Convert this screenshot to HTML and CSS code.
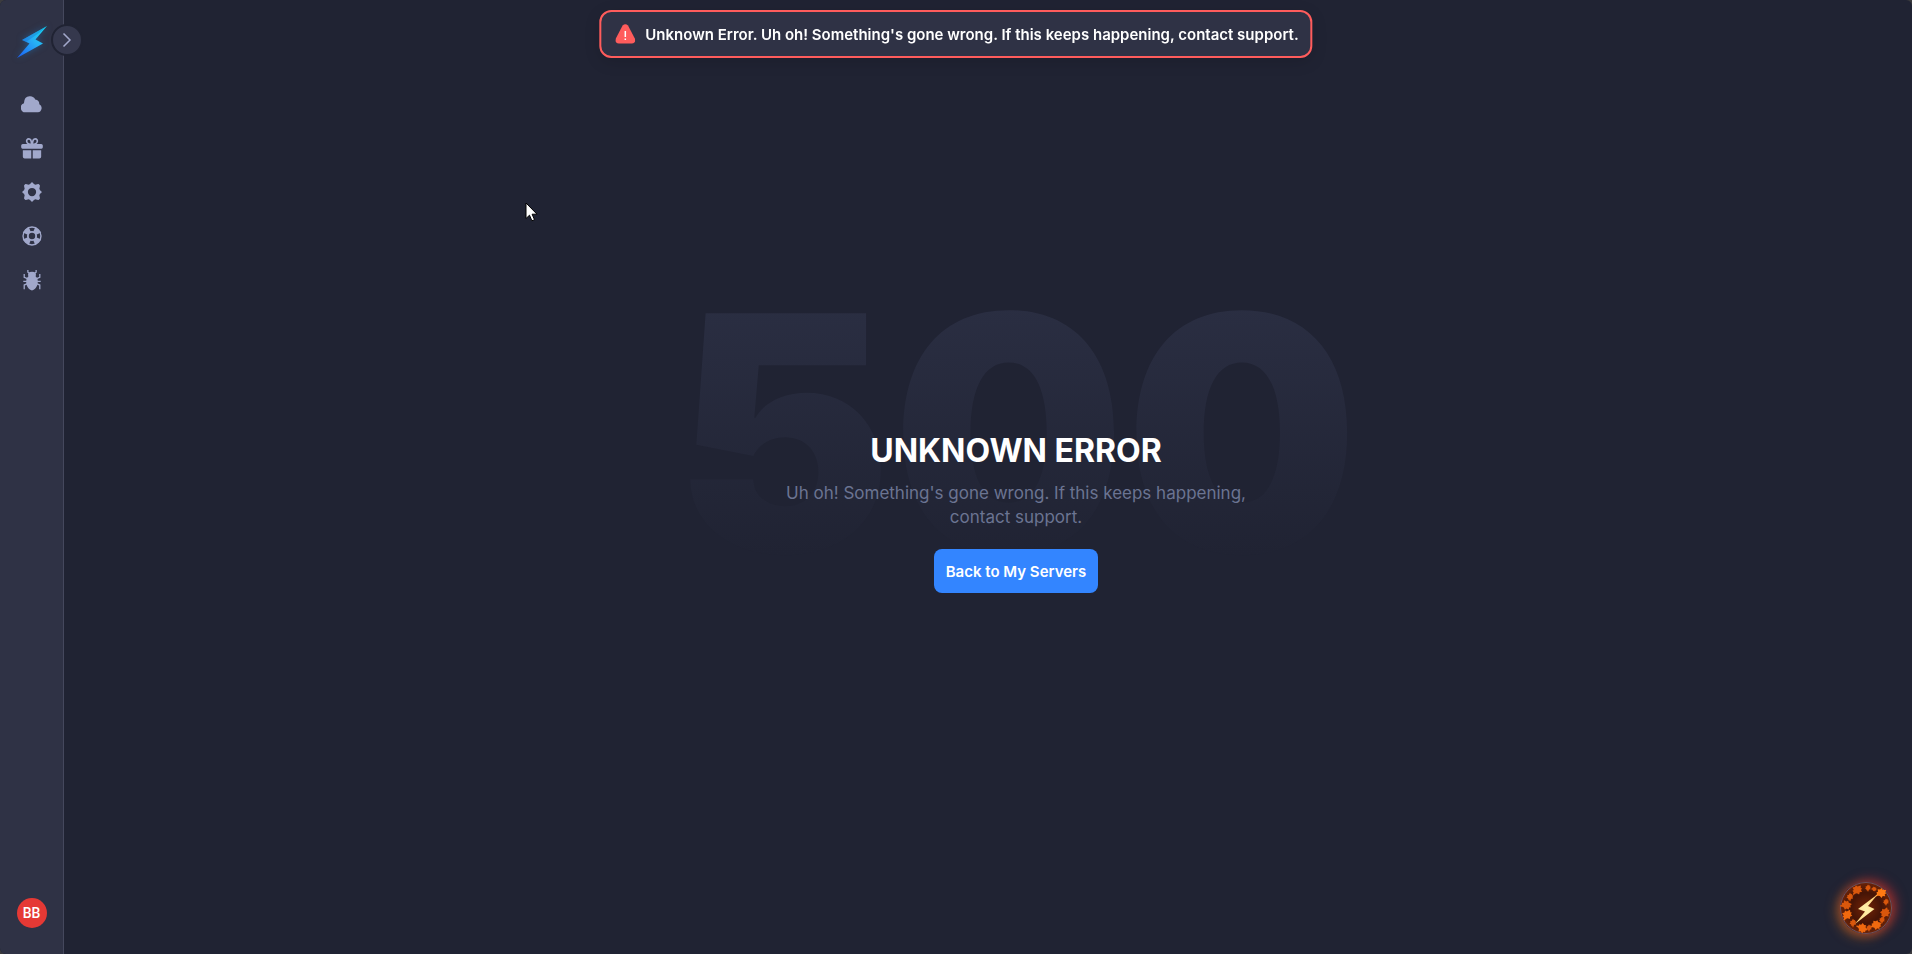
FILE: index.html
```
<!DOCTYPE html>
<html lang="en">
<head>
<meta charset="utf-8">
<title>Unknown Error</title>
<link rel="stylesheet" href="styles.css">
</head>
<body>
<div class="app">
  <aside class="sidebar">
    <a class="logo" href="#" aria-label="Home">
      <svg width="36" height="36" viewBox="0 0 36 36"><defs><linearGradient id="bolt" x1="1" y1="0" x2="0" y2="1"><stop offset="0" stop-color="#12e0f2"/><stop offset=".45" stop-color="#27b1f5"/><stop offset="1" stop-color="#1a5df5"/></linearGradient></defs><path d="M33 2 8 16 15.500 19.500 3 34 29 19.500 21.500 15.500Z" fill="url(#bolt)"/><path d="M33 2 8 16 12 18 25 9Z" fill="#155cc4" opacity=".3"/></svg>
    </a>
    <button class="toggle" type="button" aria-label="Expand menu">
      <svg width="10" height="16" viewBox="0 0 10 16"><path d="M1.500 1.500 8 8l-6.500 6.500" fill="none" stroke="currentColor" stroke-width="1.500"/></svg>
    </button>
    <nav class="nav">
      <a href="#" aria-label="Servers"><svg viewBox="0 0 24 24"><path d="M5.500 21a5 5 0 0 1-2.300-9.700Q3.500 3 10 3.500 14 3.700 15.500 7 20 7.500 20 12.200A4.700 4.700 0 0 1 18.500 21Z"/></svg></a>
      <a href="#" aria-label="Rewards"><svg viewBox="0 0 24 24"><path d="M2 14.500h9.200V23.500H4a2 2 0 0 1-2-2ZM12.800 14.500H22v7a2 2 0 0 1-2 2h-7.200ZM2 7.500h20a1.800 1.800 0 0 1 1.800 1.800v1.900q0 1.500-1.500 1.500H1.700Q.2 12.700.2 11.200V9.300A1.800 1.800 0 0 1 2 7.500Z"/><path d="M11.500 8C5 8 5 2 8.500 2c2.500 0 3 3 3 6ZM12.500 8c6.500 0 6.500-6 3-6-2.500 0-3 3-3 6Z" fill="none" stroke="currentColor" stroke-width="1.800"/></svg></a>
      <a href="#" aria-label="Settings"><svg viewBox="0 0 24 24"><path fill-rule="evenodd" d="M10 3.300Q12-.5 14 3.300L15.800 4Q19.900 2.700 19.900 4.100 21.300 4.100 20 8.200L20.700 10Q24.500 12 20.700 14L20 15.800Q21.300 19.900 19.900 19.900 19.900 21.300 15.800 20L14 20.700Q12 24.500 10 20.700L8.200 20Q4.100 21.300 4.100 19.900 2.700 19.900 4 15.800L3.300 14Q-.5 12 3.300 10L4 8.200Q2.700 4.100 4.100 4.100 4.100 2.700 8.200 4ZM12 7.500a4.500 4.500 0 1 0 0 9 4.500 4.500 0 1 0 0-9Z"/></svg></a>
      <a href="#" aria-label="Support"><svg viewBox="0 0 24 24"><circle cx="12" cy="12" r="9.800" fill="none" stroke="currentColor" stroke-width="1.500"/><circle cx="12" cy="12" r="4.500" fill="none" stroke="currentColor" stroke-width="2"/><path d="M7.500 2.200h9L14.300 7.800h-4.600ZM7.500 21.800h9L14.300 16.200h-4.600ZM2.200 7.500v9L7.800 14.300v-4.600ZM21.800 7.500v9L16.200 14.300v-4.600Z" transform="rotate(45 12 12)"/></svg></a>
      <a href="#" aria-label="Report a bug"><svg viewBox="0 0 24 24"><path d="M8 8.200Q6.500 3 12 3t4 5.200l1.800 1.800c1.600 5.500-.5 11.500-5.800 13.500-5.300-2-7.400-8-5.800-13.500Z"/><path d="M9 4.500 7.500 3.500V1M15 4.500l1.500-1V1M7 10.500 3.500 9V5.500M17 10.500 20.500 9V5.500M6.500 13.500h-4M17.500 13.500h4M7 16l-3.500 1.500V22M17 16l3.500 1.500V22" fill="none" stroke="currentColor" stroke-width="1.400"/></svg></a>
    </nav>
    <button class="avatar" type="button">BB</button>
  </aside>
  <main class="main">
    <div class="error">
      <div class="code">500</div>
      <div class="message">
        <h1>UNKNOWN ERROR</h1>
        <p>Uh oh! Something's gone wrong. If this keeps happening, contact support.</p>
        <button class="back" type="button">Back to My Servers</button>
      </div>
    </div>
  </main>
</div>
<div class="toast" role="alert">
  <svg width="20" height="20" viewBox="0 0 20 20"><path d="M7.300 1.500Q10-1.200 12.700 1.500L19.500 14.500Q21 19.300 16.500 19.500H3.500Q-1 19.300.5 14.500Z" fill="#ff5c5c"/><path d="M10 7v6M10 14.500V16" stroke="#fff" stroke-width="1.500"/></svg>
  <span>Unknown Error. Uh oh! Something's gone wrong. If this keeps happening, contact support.</span>
</div>
<button class="chat" type="button" aria-label="Open chat">
  <svg width="52" height="52" viewBox="0 0 52 52">
    <defs>
      <radialGradient id="disc"><stop offset="0" stop-color="#742407"/><stop offset=".6" stop-color="#451406"/><stop offset="1" stop-color="#6a2308"/></radialGradient>
      <linearGradient id="spark" x1="1" y1="0" x2="0" y2="1"><stop offset="0" stop-color="#ffc465"/><stop offset=".5" stop-color="#fff0a8"/><stop offset="1" stop-color="#ffcf78"/></linearGradient>
      <path id="leaf" d="M0-6 1.500-4 3-4.500 3-2.500 5-2 3.500 0 4.500 2 2 2.500 1 4 .5 6H-.5L-1 4-3 3.500-2.500 2-5 1-3.500-1-4-3-2-3Z"/>
    </defs>
    <circle cx="26" cy="26" r="25.500" fill="url(#disc)" stroke="#73525c"/>
    <g fill="#d9570c">
      <use href="#leaf" transform="translate(17 8) rotate(40)"/><use href="#leaf" transform="translate(28 6) scale(.6)"/><use href="#leaf" transform="translate(34 7) scale(.5) rotate(90)"/><use href="#leaf" transform="translate(41 11) rotate(60)" fill="#ff7a12"/><use href="#leaf" transform="translate(46 20) scale(.6)"/><use href="#leaf" transform="translate(45 31) rotate(20)"/><use href="#leaf" transform="translate(42 38) scale(.6)"/><use href="#leaf" transform="translate(36 43) rotate(70)" fill="#f0690f"/><use href="#leaf" transform="translate(29 46) scale(.6)"/><use href="#leaf" transform="translate(22 46) rotate(110)" fill="#f0690f"/><use href="#leaf" transform="translate(13 41) scale(.7)"/><use href="#leaf" transform="translate(7 33) rotate(30)" fill="#f0690f"/><use href="#leaf" transform="translate(6 23) rotate(80)"/><use href="#leaf" transform="translate(10 15) scale(.7)"/>
    </g>
    <path d="M38 12 18 27 25 29.500 15 42 34.500 27 28 24Z" fill="url(#spark)"/>
  </svg>
</button>
<svg class="cursor" width="14" height="21" viewBox="0 0 14 21"><path d="M1 1v15.500l3.500-3.300 2.400 5.600 2.600-1.100-2.400-5.500H12Z" fill="#fff" stroke="#000"/></svg>
</body>
</html>
```
FILE: styles.css
```
* { box-sizing: border-box; }
body {
  margin: 0;
  background: #3b3b3e;
  color: #fff;
  font-family: Inter, "Open Sans", sans-serif;
}
button { border: 0; padding: 0; font: inherit; color: inherit; }
.app {
  display: flex;
  min-height: 100vh;
  border-radius: 6px;
  background: #202333;
}
.sidebar {
  position: relative;
  display: flex;
  flex-direction: column;
  align-items: center;
  width: 64px;
  padding: 24px 0 26px;
  border-radius: 6px 0 0 6px;
  background: #2f3245;
  border-right: 1px solid #45485d;
}
.logo { height: 36px; filter: drop-shadow(0 0 3px #1d79c480); }
.logo svg { display: block; }
.toggle {
  position: absolute;
  top: 24px;
  right: -20px;
  display: grid;
  place-items: center;
  width: 32px;
  height: 32px;
  border: 2px solid #202333;
  border-radius: 50%;
  background: #35384d;
  color: #a3a9cc;
}
.nav { display: flex; flex-direction: column; margin-top: 22px; color: #a1a8cb; }
.nav a { display: grid; place-items: center; width: 44px; height: 44px; color: inherit; }
.nav svg { width: 22px; height: 22px; fill: currentColor; }
.avatar {
  width: 30px;
  height: 30px;
  margin-top: auto;
  border-radius: 50%;
  background: #e53935;
  font: 500 14px Roboto, sans-serif;
}
.main {
  flex: 1;
  display: grid;
  place-items: center;
  padding: 0 0 88px 56px;
}
.error { display: grid; justify-items: center; }
.code, .message { grid-area: 1 / 1; }
.code {
  font-size: 328px;
  line-height: 320px;
  font-weight: 900;
  color: transparent;
  background: linear-gradient(#2a2e42 10%, #202333 88%);
  background-clip: text;
}
.message {
  display: flex;
  flex-direction: column;
  align-items: center;
  align-self: end;
  max-width: 480px;
  text-align: center;
}
h1 { margin: 0 0 12px; font-size: 32px; line-height: 36px; font-weight: 700; }
p { margin: 0 0 20px; font-size: 17px; line-height: 24px; color: #6b7492; }
.back {
  height: 44px;
  padding: 0 12px;
  border-radius: 8px;
  background: #3385ff;
  font-size: 15px;
  font-weight: 600;
}
.toast {
  position: fixed;
  top: 10px;
  left: 50%;
  transform: translateX(-50%);
  display: flex;
  align-items: center;
  gap: 10px;
  height: 48px;
  padding: 0 12px 0 14px;
  border: 2px solid #ff5c5c;
  border-radius: 12px;
  background: #2f3245;
  box-shadow: 0 4px 16px #0002;
  font-size: 15px;
  font-weight: 600;
  white-space: nowrap;
}
.chat {
  position: fixed;
  right: 20px;
  bottom: 20px;
  width: 52px;
  height: 52px;
  border-radius: 50%;
  background: none;
  box-shadow: 4px -2px 12px #d32f2f99, -3px 3px 12px #d9701a99;
}
.chat svg { display: block; }
.cursor { position: absolute; top: 202px; left: 525px; }
```
